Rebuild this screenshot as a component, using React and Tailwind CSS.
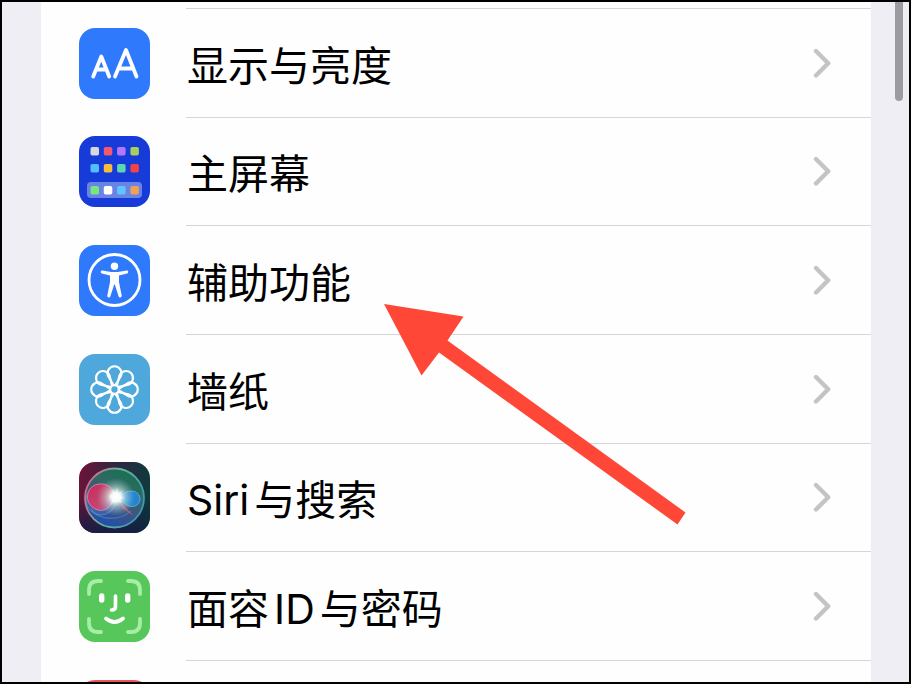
import React from 'react';

function DisplayIcon() {
  return (
    <svg viewBox="0 0 71 71" className="size-full" fill="none" stroke="#fff" strokeWidth="3.800" strokeLinecap="round" strokeLinejoin="round" aria-hidden="true">
      <rect width="71" height="71" rx="16" fill="#2f79fd" stroke="none" />
      <path d="M14.200 48.500 L22.300 28.500 L30.200 48.500 M17 41.500 H27.500" />
      <path d="M36 48.500 L47 22 L57.500 48.500 M39.500 40.500 H54" />
    </svg>
  );
}

const appColors = [
  ['#d5d8e0', '#f4586f', '#b377fb', '#a6cf5c'],
  ['#54bdfb', '#f6bd3c', '#5bd6b0', '#ef4443'],
  ['#77e580', '#ffffff', '#5fc4ff', '#f1a057'],
];
const appRows = [11, 28, 50];

function HomeIcon() {
  return (
    <svg viewBox="0 0 71 71" className="size-full" aria-hidden="true">
      <rect width="71" height="71" rx="16" fill="#163bd8" />
      <rect x="8" y="46" width="55" height="16" rx="4" fill="#6a84e6" />
      {appColors.map((row, r) =>
        row.map((color, c) => (
          <rect key={color} x={11.5 + c * 13.3} y={appRows[r]} width="8.500" height="8.500" rx="1.800" fill={color} />
        ))
      )}
    </svg>
  );
}

function AccessibilityIcon() {
  return (
    <svg viewBox="0 0 71 71" className="size-full" aria-hidden="true">
      <rect width="71" height="71" rx="16" fill="#2f79fd" />
      <circle cx="35.500" cy="35" r="25.500" fill="none" stroke="#fff" strokeWidth="2.800" />
      <circle cx="35.500" cy="21.300" r="3.700" fill="#fff" />
      <path
        d="M23.500 25.500 C27 26.300 31 27 35.500 27 C40 27 44 26.300 47.500 25.500 C49.500 25.200 49.900 28 48 28.500 L40 30.500 V37 L42.700 50.500 C43 52.700 40.200 53.200 39.600 51.200 L35.800 39.500 H35.200 L31.400 51.200 C30.800 53.200 28 52.700 28.300 50.500 L31 37 V30.500 L23 28.500 C21.100 28 21.500 25.200 23.500 25.500 Z"
        fill="#fff"
      />
    </svg>
  );
}

const petals = [0, 45, 90, 135, 180, 225, 270, 315];

function WallpaperIcon() {
  return (
    <svg viewBox="0 0 71 71" className="size-full" aria-hidden="true">
      <rect width="71" height="71" rx="16" fill="#4fa8dc" />
      <g transform="translate(35.500 35.500)" fill="none" stroke="#fff" strokeWidth="2.100" strokeLinejoin="round">
        {petals.map((angle) => (
          <path key={angle} transform={`rotate(${angle})`} d="M0 -3 L-6.200 -13 A7 7 0 1 1 6.200 -13 Z" />
        ))}
        <circle r="4.200" fill="#4fa8dc" />
      </g>
    </svg>
  );
}

function SiriIcon() {
  return (
    <svg viewBox="0 0 71 71" className="size-full" aria-hidden="true">
      <defs>
        <linearGradient id="siri-bg" x1="0" y1="0.300" x2="1" y2="0.500">
          <stop offset="0" stopColor="#6b1438" />
          <stop offset="0.450" stopColor="#2e2742" />
          <stop offset="1" stopColor="#0c3c3a" />
        </linearGradient>
        <linearGradient id="siri-shade" x1="0" y1="0" x2="0" y2="1">
          <stop offset="0.500" stopColor="#10173e" stopOpacity="0" />
          <stop offset="1" stopColor="#141a44" stopOpacity="0.800" />
        </linearGradient>
        <linearGradient id="siri-orb" x1="0.800" y1="0" x2="0.300" y2="1">
          <stop offset="0" stopColor="#14704f" />
          <stop offset="0.350" stopColor="#2f6a63" />
          <stop offset="0.600" stopColor="#3f5580" />
          <stop offset="1" stopColor="#1d4fae" />
        </linearGradient>
        <linearGradient id="siri-ring" x1="0" y1="0.300" x2="1" y2="0.700">
          <stop offset="0" stopColor="#d7668a" />
          <stop offset="0.450" stopColor="#63b59c" />
          <stop offset="1" stopColor="#3d92b4" />
        </linearGradient>
        <linearGradient id="siri-pink" x1="0" y1="0" x2="1" y2="1">
          <stop offset="0" stopColor="#c9295c" />
          <stop offset="0.600" stopColor="#c4476f" />
          <stop offset="1" stopColor="#8470ba" />
        </linearGradient>
        <radialGradient id="siri-glow">
          <stop offset="0" stopColor="#fff" />
          <stop offset="0.250" stopColor="#f4fffd" stopOpacity="0.950" />
          <stop offset="0.500" stopColor="#d0eee9" stopOpacity="0.550" />
          <stop offset="1" stopColor="#9cc7c2" stopOpacity="0" />
        </radialGradient>
      </defs>
      <rect width="71" height="71" rx="16" fill="url(#siri-bg)" />
      <rect width="71" height="71" rx="16" fill="url(#siri-shade)" />
      <circle cx="35.500" cy="36" r="29.500" fill="url(#siri-orb)" stroke="url(#siri-ring)" strokeWidth="1.800" />
      <circle cx="22" cy="38" r="15" fill="#4a6fb8" opacity="0.500" stroke="#7fb0e0" />
      <path d="M38 36 C35 26 28 21 20 22 C11 23 7 31 9 39 C12 48 23 51 29 46 C33 43 34 38 38 36 Z" fill="url(#siri-pink)" stroke="#e38aa8" strokeWidth="0.800" />
      <path d="M38 35 C43 33 46 29 52 29 C58 29 61 33 61 37 C61 42 56 46 50 44 C45 43 43 38 38 35 Z" fill="#2583d0" stroke="#59b8e0" strokeWidth="0.800" />
      <path d="M38 36 L55 54 L44 47 Z" fill="#c9567c" opacity="0.700" />
      <path d="M12 47 C20 59 40 59 52 49" fill="none" stroke="#5a97dc" strokeWidth="1.500" opacity="0.450" />
      <circle cx="37" cy="35" r="19" fill="url(#siri-glow)" />
      <path d="M38 25 L39.500 32 L44 28 L41 34 L46 36 L41 37 L43 41 L37.500 39 L32 42 L34 36 L29 34 L35 32.500 L32 28 L37 31 Z" fill="#fff" opacity="0.500" />
    </svg>
  );
}

function FaceIdIcon() {
  return (
    <svg viewBox="0 0 71 71" className="size-full" fill="none" strokeLinecap="round" aria-hidden="true">
      <rect width="71" height="71" rx="16" fill="#57c75b" />
      <path
        d="M10 23 V19 Q10 10 19 10 H22 M49 10 H52 Q61 10 61 19 V23 M61 48 V52 Q61 61 52 61 H49 M22 61 H19 Q10 61 10 52 V48"
        stroke="#a6eda6"
        strokeWidth="3.800"
      />
      <path d="M22.700 25 V29 M48.700 25 V29" stroke="#fff" strokeWidth="5.400" />
      <path d="M36.500 25 V35.500 Q36.500 39 32.500 39" stroke="#fff" strokeWidth="3.600" />
      <path d="M27 47.500 Q35.500 54.500 44 47.500" stroke="#fff" strokeWidth="3.800" />
    </svg>
  );
}

function Chevron() {
  return (
    <svg viewBox="0 0 18 30" className="w-[18px] h-[30px] shrink-0" fill="none" aria-hidden="true">
      <path d="M3 3 L15.200 15.200 L3 27.500" stroke="#c4c4c6" strokeWidth="4.400" strokeLinecap="round" strokeLinejoin="round" />
    </svg>
  );
}

const items = [
  { label: '显示与亮度', Icon: DisplayIcon },
  { label: '主屏幕', Icon: HomeIcon },
  { label: '辅助功能', Icon: AccessibilityIcon },
  { label: '墙纸', Icon: WallpaperIcon },
  { label: 'Siri与搜索', Icon: SiriIcon },
  { label: '面容ID与密码', Icon: FaceIdIcon },
];

function SettingsRow({ label, Icon }) {
  return (
    <li className="flex">
      <a href="#" className="flex flex-1 items-stretch">
        <span className="size-[71px] shrink-0 self-center">
          <Icon />
        </span>
        <span className="ml-9 flex flex-1 items-center justify-between border-b border-[#d6d6d8] pl-px pr-10">
          <span className="pt-1.5 text-[41px] leading-[60px] [text-autospace:normal]">{label}</span>
          <Chevron />
        </span>
      </a>
    </li>
  );
}

function App() {
  return (
    <main
      lang="zh-CN"
      className="relative flex h-screen overflow-hidden border-2 border-black bg-[#efeef4] text-black font-[Inter,'Noto_Sans_CJK_SC',sans-serif]"
    >
      <section className="ml-[39px] flex-1 bg-[#fefefe] pl-[38px]">
        <div className="ml-[107px] h-[7px] border-b border-[#d6d6d8]" />
        <ul className="grid h-[652px] grid-rows-6">
          {items.map((item) => (
            <SettingsRow key={item.label} {...item} />
          ))}
        </ul>
        <div className="mt-[19px] size-[71px] rounded-2xl bg-[#e4575a]" />
      </section>

      <div className="flex w-[38px] shrink-0 justify-end pr-1.5">
        <div className="h-[99px] w-2 rounded-b-full bg-[#9c9ba2]" />
      </div>

      {/* pointer to the accessibility row */}
      <svg viewBox="0 0 302 221" className="pointer-events-none absolute left-[382px] top-[302px] h-[221px] w-[302px]" aria-hidden="true">
        <path d="M0 0 L79.500 12.500 L63.500 36.500 L301.500 208.500 L293.500 220.500 L55 48.500 L37.500 71.500 Z" fill="#ff4737" />
      </svg>
    </main>
  );
}

export default App;
